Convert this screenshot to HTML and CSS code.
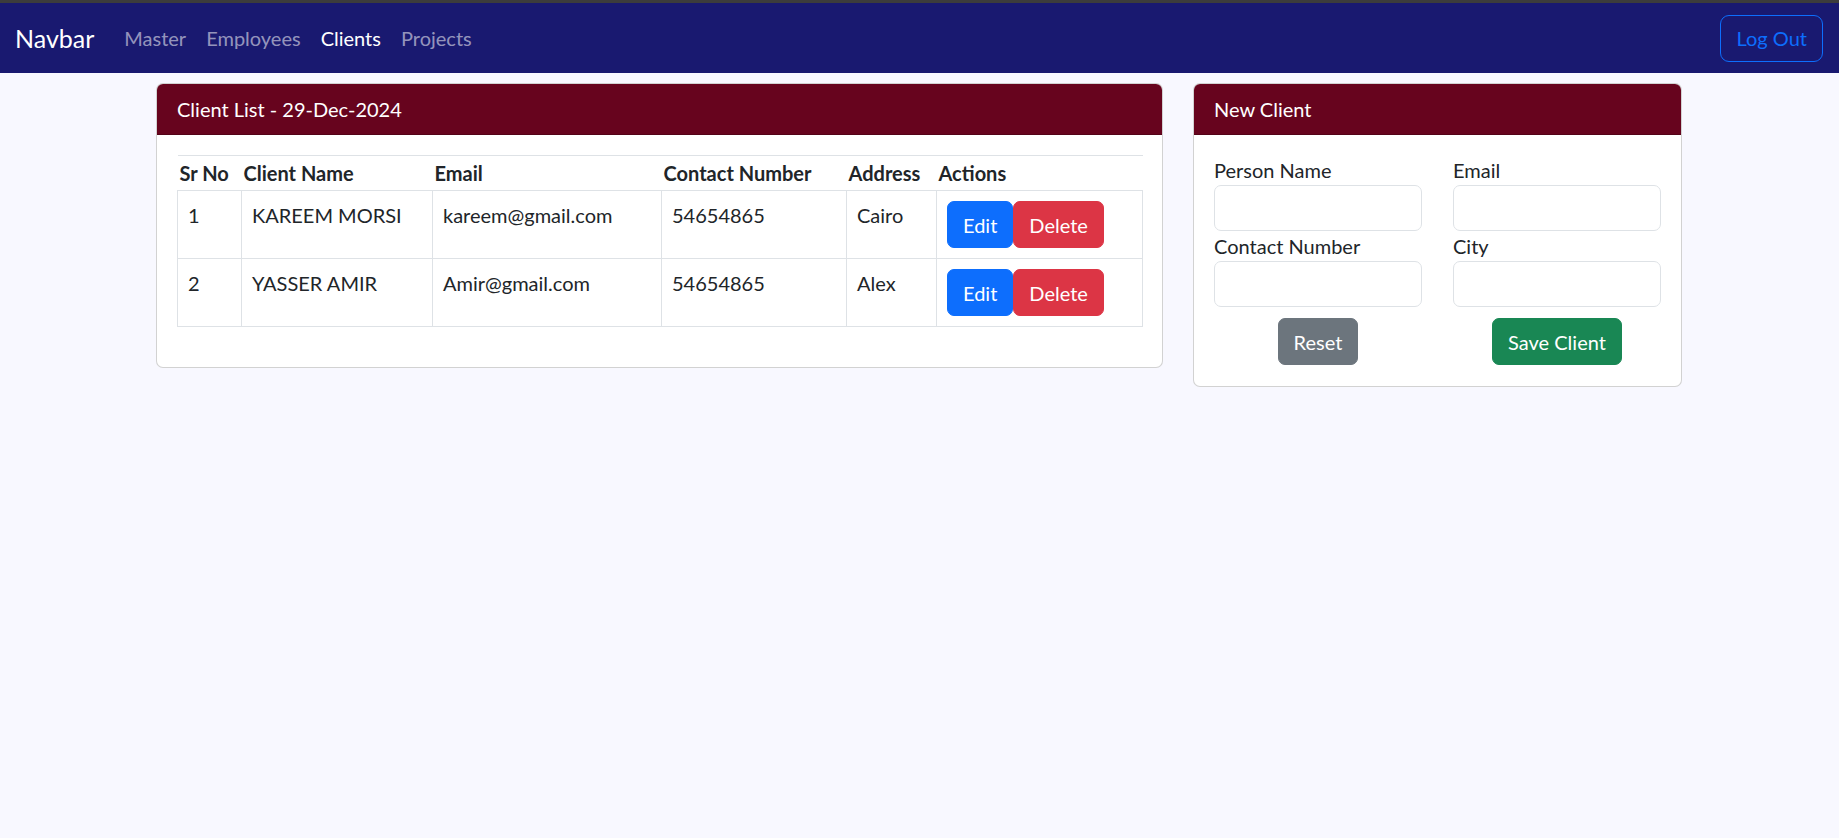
FILE: index.html
```html
<!DOCTYPE html>
<html lang="en">
<head>
<meta charset="utf-8">
<title>Clients</title>
<link rel="stylesheet" href="styles.css">
</head>
<body>
<div class="topstrip"></div>
<nav class="navbar">
  <a class="brand" href="#">Navbar</a>
  <ul class="nav">
    <li><a class="nav-link" href="#">Master</a></li>
    <li><a class="nav-link" href="#">Employees</a></li>
    <li><a class="nav-link active" href="#">Clients</a></li>
    <li><a class="nav-link" href="#">Projects</a></li>
  </ul>
  <button class="btn-logout" type="button">Log Out</button>
</nav>
<main class="container">
  <section class="card card-list">
    <div class="card-header">Client List - 29-Dec-2024</div>
    <div class="card-body">
      <table class="table">
        <colgroup>
          <col class="c-sr"><col class="c-name"><col class="c-email"><col class="c-contact"><col class="c-addr"><col class="c-act">
        </colgroup>
        <thead>
          <tr><th>Sr No</th><th>Client Name</th><th>Email</th><th>Contact Number</th><th>Address</th><th>Actions</th></tr>
        </thead>
        <tbody>
          <tr>
            <td>1</td><td>KAREEM MORSI</td><td>kareem@gmail.com</td><td>54654865</td><td>Cairo</td>
            <td><div class="actions"><button class="btn btn-primary" type="button">Edit</button><button class="btn btn-danger" type="button">Delete</button></div></td>
          </tr>
          <tr>
            <td>2</td><td>YASSER AMIR</td><td>Amir@gmail.com</td><td>54654865</td><td>Alex</td>
            <td><div class="actions"><button class="btn btn-primary" type="button">Edit</button><button class="btn btn-danger" type="button">Delete</button></div></td>
          </tr>
        </tbody>
      </table>
    </div>
  </section>
  <section class="card card-form">
    <div class="card-header">New Client</div>
    <div class="card-body">
      <div class="form-grid">
        <div class="field"><label>Person Name</label><input class="form-control" type="text"></div>
        <div class="field"><label>Email</label><input class="form-control" type="text"></div>
        <div class="field"><label>Contact Number</label><input class="form-control" type="text"></div>
        <div class="field"><label>City</label><input class="form-control" type="text"></div>
        <div class="btn-cell"><button class="btn btn-secondary" type="button">Reset</button></div>
        <div class="btn-cell"><button class="btn btn-success" type="button">Save Client</button></div>
      </div>
    </div>
  </section>
</main>
</body>
</html>
```
FILE: styles.css
```css
* { box-sizing: border-box; }
body {
  margin: 0;
  background: #f8f8ff;
  font-family: "Segoe UI", Lato, "Noto Sans", sans-serif;
  font-size: 20px;
  line-height: 30px;
  color: #212529;
}
.topstrip { height: 3px; background: #3c3c3c; }
.navbar {
  height: 70px;
  background: #191970;
  display: flex;
  align-items: center;
  padding: 0 16px 0 15px;
}
.brand {
  color: #fff;
  text-decoration: none;
  font-size: 25px;
  line-height: 37px;
  margin-right: 20px;
}
.nav { display: flex; list-style: none; margin: 0; padding: 0; }
.nav-link {
  display: block;
  padding: 0 10px;
  color: rgba(255, 255, 255, 0.55);
  text-decoration: none;
}
.nav-link.active { color: #fff; }
.btn-logout {
  margin-left: auto;
  height: 47px;
  padding: 0 15px;
  border: 1px solid #0d6efd;
  border-radius: 9px;
  background: transparent;
  color: #0d6efd;
  font: inherit;
}
.container {
  display: flex;
  align-items: flex-start;
  gap: 30px;
  width: 1527px;
  margin: 10px auto 0;
}
.card {
  background: #fff;
  border: 1px solid rgba(0, 0, 0, 0.175);
  border-radius: 7px;
  overflow: hidden;
  flex: none;
}
.card-list { width: 1007px; }
.card-form { width: 489px; }
.card-header {
  background: #67041e;
  color: #fff;
  padding: 10px 20px;
  border-bottom: 1px solid rgba(0, 0, 0, 0.175);
}
.card-body { padding: 20px; }
.table {
  width: 965px;
  border-collapse: collapse;
  table-layout: fixed;
  margin-bottom: 20px;
  border-top: 1px solid #dee2e6;
}
.c-sr { width: 64px; }
.c-name { width: 191px; }
.c-email { width: 229px; }
.c-contact { width: 185px; }
.c-addr { width: 90px; }
.c-act { width: 206px; }
.table th {
  text-align: left;
  font-weight: 700;
  padding: 2px 2px;
  white-space: nowrap;
}
.table td {
  border: 1px solid #dee2e6;
  padding: 9px 10px 10px;
  vertical-align: top;
  white-space: nowrap;
}
.actions { display: flex; padding-top: 1px; }
.btn {
  height: 47px;
  padding: 0 15px;
  border: 1px solid transparent;
  border-radius: 7px;
  color: #fff;
  font: inherit;
}
.btn-primary { background: #0d6efd; border-color: #0d6efd; }
.btn-danger { background: #dc3545; border-color: #dc3545; }
.btn-secondary { background: #6c757d; border-color: #6c757d; }
.btn-success { background: #198754; border-color: #198754; }
.form-grid {
  display: grid;
  grid-template-columns: 208px 208px;
  column-gap: 31px;
}
.field { display: flex; flex-direction: column; }
.field label { display: block; height: 30px; }
.form-control {
  height: 46px;
  border: 1px solid #dee2e6;
  border-radius: 7px;
  background: #fff;
  font: inherit;
}
.btn-cell {
  display: flex;
  justify-content: center;
  margin-top: 11px;
  margin-bottom: 1px;
}
```
